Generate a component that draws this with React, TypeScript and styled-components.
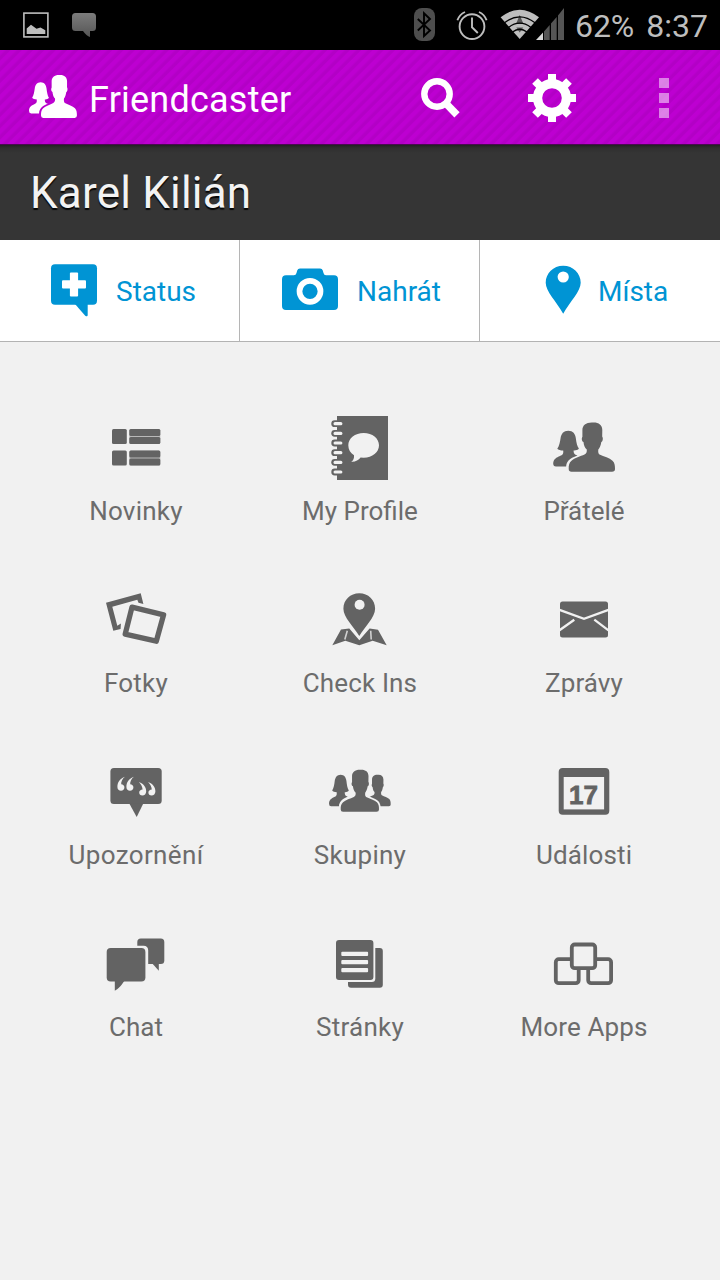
import React from "react";
import styled, { createGlobalStyle } from "styled-components";

const INK = "#636363";
const PAGE = "#f1f1f1";
const BLUE = "#0094d4";
const SYS = "#bebebe";

const GlobalStyle = createGlobalStyle`
  * { box-sizing: border-box; }
  body {
    margin: 0;
    background: ${PAGE};
    font-family: Roboto, "Noto Sans", sans-serif;
  }
`;

const Screen = styled.div`
  display: flex;
  flex-direction: column;
  width: 720px;
  min-height: 1280px;
  background: ${PAGE};
`;

const StatusBar = styled.div`
  display: flex;
  align-items: center;
  height: 50px;
  padding: 0 12px 0 23px;
  background: #000;
`;

const Spacer = styled.div`
  flex: 1;
`;

const Glyph = styled.svg<{ $gap?: number; $lift?: number }>`
  display: block;
  flex: none;
  margin-left: ${(p) => p.$gap ?? 0}px;
  margin-bottom: ${(p) => p.$lift ?? 0}px;
`;

const SystemText = styled.span<{ $gap: number }>`
  margin-left: ${(p) => p.$gap}px;
  padding-top: 2px;
  color: ${SYS};
  font-size: 32px;
  line-height: 48px;
  white-space: nowrap;
`;

const ActionBar = styled.header`
  display: flex;
  align-items: center;
  height: 95px;
  padding: 2px 51px 0 29px;
  border-bottom: 1px solid #4a0a52;
  background: repeating-linear-gradient(135deg, #bd00d1 0 3px, #b300c6 5px 7px, #bd00d1 8px);
`;

const AppTitle = styled.h1`
  margin: 3px 0 0 12px;
  color: #fff;
  font-size: 36px;
  font-weight: 400;
  line-height: 44px;
  letter-spacing: 0.22px;
`;

const Overflow = styled.div`
  display: flex;
  flex-direction: column;
  gap: 5px;
  width: 10px;
  margin-left: 83px;
`;

const Dot = styled.i`
  height: 10px;
  background: rgba(255, 255, 255, 0.5);
`;

const ProfileBar = styled.div`
  display: flex;
  align-items: center;
  height: 95px;
  padding: 1px 30px 0;
  background: linear-gradient(#222 0, #2f2f2f 3px, #353535 8px);
`;

const ProfileName = styled.h2`
  margin: 0;
  color: #f3f3f3;
  font-size: 44px;
  font-weight: 400;
  line-height: 56px;
  letter-spacing: 0.2px;
  text-shadow: 0 2px 1px rgba(0, 0, 0, 0.9);
`;

const Tabs = styled.nav`
  display: grid;
  grid-template-columns: repeat(3, 240px);
  height: 102px;
  border-bottom: 1px solid #b3b3b3;
  background: #fff;
`;

const Tab = styled.div<{ $inset: number; $gap: number }>`
  display: flex;
  align-items: center;
  gap: ${(p) => p.$gap}px;
  padding-left: ${(p) => p.$inset}px;
  border-right: 1px solid #b5b5b5;
  color: ${BLUE};
  &:last-child { border-right: 0; }
`;

const TabText = styled.span`
  padding-top: 2px;
  font-size: 28px;
  line-height: 34px;
`;

const Grid = styled.main`
  display: grid;
  grid-template-columns: repeat(3, 224px);
  grid-auto-rows: 172px;
  padding: 74px 24px 0;
`;

const Cell = styled.div`
  display: flex;
  flex-direction: column;
  align-items: center;
  gap: 16px;
`;

const Label = styled.span<{ $spacing: number }>`
  color: #6c6c6c;
  font-size: 26px;
  line-height: 30px;
  letter-spacing: ${(p) => (p.$spacing ? `${p.$spacing}px` : "normal")};
  white-space: nowrap;
`;

const MAN =
  "M40 6.6C46 6 50.3 8.5 50.3 14L50.2 20.5C51.4 22 50.8 25.5 49.3 26C48.8 29.5 47.6 32 46.3 33.5C46 36 46.3 37.6 47.5 38.5C52 40.5 57.5 42 60.5 44.7C62.6 46.8 63 49 63 53Q63 55.8 60 55.8H19.5Q16.7 55.8 16.7 53C16.6 49 17.2 46.8 19.5 44.7C22.5 42 28.5 40.3 32.5 38.5C34.3 37.5 35 36.2 34.8 33.5C33 32 31.8 29.5 31.5 26C29.8 25.5 29.3 22.5 30.4 20.8L30.4 14C30.4 9.5 34 6.5 40 6.6Z";
const WOMAN =
  "M16.3 14.8C21 14.8 23.3 18 23.8 22C24.4 27 25.3 30.5 26.9 32.6C26 34.2 23.5 34.6 21.6 34.5C21.6 36.5 22 38 23.5 38.8L25.5 39.6C21 41.3 14.7 43.5 14.1 50.5H4Q1.2 50.5 1.2 47.5C1.3 43 4.5 41.5 8 40C10.5 39 11.6 38 11.2 34.5C8.5 34.4 6.3 34 5.3 32.7C7.3 30 8 26 8.6 22C9.2 18 11.5 14.8 16.3 14.8Z";
const OPEN_QUOTE =
  "M20.9 16.7C16 18.5 13.4 22 13.4 27C13.4 29.5 15 30.7 17 30.7C19 30.7 20.4 29.3 20.4 27.3C20.4 25.5 19 24.2 17.2 24.2C17 21.5 18.5 18.5 20.9 16.7Z";
const CLOSE_QUOTE =
  "M34.9 21.9C39.5 23.5 42.2 27 42.2 31.2C42.2 34 40.5 35.6 38.4 35.6C36.4 35.6 35.2 34.4 35.2 32.6C35.2 30.8 36.6 29.8 38.6 29.6C38.4 26.5 37 24 34.9 21.9Z";

const Icon = ({ color = INK, children }: { color?: string; children: React.ReactNode }) => (
  <Glyph width="64" height="64" viewBox="0 0 64 64" fill={color}>
    {children}
  </Glyph>
);

const NewsIcon = () => (
  <Icon>
    {[13, 34.4].map((y) => (
      <g key={y}>
        <rect x="8" y={y} width="14.8" height="15" rx="1.5" />
        <rect x="25.3" y={y} width="31" height="15" rx="1.5" fill="#b9b9b9" />
        <rect x="25.3" y={y} width="31" height="7" rx="1.5" />
        <rect x="25.3" y={y + 8} width="31" height="7" rx="1.5" />
      </g>
    ))}
  </Icon>
);

const ProfileIcon = () => (
  <Icon>
    <rect x="9" y="0" width="51" height="64" />
    {[7.7, 17.3, 27, 36.7, 46.3, 56].map((y) => (
      <g key={y}>
        <rect x="3.3" y={y - 3.4} width="9" height="6.8" rx="3.4" />
        <rect x="5.5" y={y - 1.6} width="8.9" height="3.2" rx="1.5" fill={PAGE} />
      </g>
    ))}
    <path d="M35.7 17C44.4 17 51 22.3 51 29.3S44.4 41.7 35.7 41.7Q34 41.7 32.6 41.6C30.5 44.5 27 46.2 23.2 45.8C25.3 44.4 26.3 42.5 26 39.2C22.3 37 20.3 33.5 20.3 29.3C20.3 22.3 27 17 35.7 17Z" fill={PAGE} />
  </Icon>
);

const FriendsIcon = () => (
  <Icon>
    <path d={WOMAN} />
    <path d={MAN} />
  </Icon>
);

const PhotosIcon = () => (
  <Icon>
    <path d="M2 14.7L36.7 5.3L39.4 16L34.5 14.7L33.3 11.8L8.3 18.7L13.3 37.8L16.9 35.5L16.6 41L9.3 42.7Z" />
    <path d="M28 19.2L59.6 26.8L52.3 53.2L21.2 46.2Z" fill="none" stroke={INK} strokeWidth="5.3" strokeLinejoin="round" />
  </Icon>
);

const CheckInIcon = () => (
  <Icon>
    <path d="M4.3 57.2L13 41.4L21.3 40.6L31.3 52.3L41.6 40.6L50 41.8L58.7 57.2L44.7 52.7L31.3 57.3L17.3 52.7Z" />
    <path d="M19.3 42.7L16.8 51.5M42.7 42.7L43.2 51.5" stroke="#d0d0d0" strokeWidth="1.6" />
    <path
      stroke={PAGE}
      strokeWidth="3.4"
      paintOrder="stroke"
      d="M31.3 5.3C40.3 5.3 47.1 12 47.1 20.8C47.1 29.5 37 38.5 31.3 48C25.6 38.5 15.4 29.5 15.4 20.8C15.4 12 22.3 5.3 31.3 5.3Z"
    />
    <circle cx="31.6" cy="16.7" r="5" fill={PAGE} />
  </Icon>
);

const MessagesIcon = () => (
  <Icon>
    <rect x="8" y="13.4" width="48" height="36" rx="2.5" />
    <path d="M7.5 21.8L32 30.8L56.5 21.8M7.5 42.3L22.3 31.7M56.5 42.3L42.3 31.7" fill="none" stroke={PAGE} strokeWidth="2.3" />
  </Icon>
);

const NoticesIcon = () => (
  <Icon>
    <rect x="6.4" y="8" width="51.3" height="36" rx="3.5" />
    <path d="M25.3 43.5L32.7 57L39.3 43.5Z" />
    <g fill={PAGE}>
      <path d={OPEN_QUOTE} />
      <path d={OPEN_QUOTE} transform="translate(9 0)" />
      <path d={CLOSE_QUOTE} />
      <path d={CLOSE_QUOTE} transform="translate(9.2 0)" />
    </g>
  </Icon>
);

const GroupsIcon = () => (
  <Icon>
    <path d={WOMAN} transform="translate(.1 1.6) scale(.77 .885)" />
    <path d={MAN} transform="translate(26.6 10.5) scale(.573 .64)" />
    <path d={MAN} transform="translate(-1.1 4.15) scale(.827 .854)" stroke={PAGE} strokeWidth="4.4" paintOrder="stroke" />
  </Icon>
);

const DayText = styled.text`
  font: bold 26px "Liberation Sans", Arial, sans-serif;
  stroke: ${INK};
  stroke-width: 0.8px;
`;

const EventsIcon = () => (
  <Icon>
    <rect x="6.7" y="8" width="50.6" height="46.8" rx="4" />
    <rect x="11.7" y="17" width="40.4" height="32.4" fill={PAGE} />
    <DayText x="17" y="43.8">17</DayText>
  </Icon>
);

const ChatIcon = () => (
  <Icon>
    <rect x="33.3" y="6.6" width="27" height="25.4" rx="3.5" />
    <path d="M48.3 31.5L54.8 38.7V31.5Z" />
    <path d="M31 13.7H39.5Q44.2 13.7 44.2 18.5V34H31Z" fill={PAGE} />
    <rect x="2.7" y="16" width="38.7" height="33.4" rx="4" />
    <path d="M10.8 49V58.7Q15 57 20.3 49Z" />
  </Icon>
);

const PagesIcon = () => (
  <Icon>
    <rect x="20" y="16" width="34.8" height="39.8" rx="3" />
    <path d="M18 14H47.3V46.5Q47.3 50 43.8 50H18Z" fill={PAGE} />
    <rect x="8" y="8" width="37.4" height="40" rx="3" />
    <g fill={PAGE}>
      <rect x="13.3" y="19.8" width="26.8" height="4.3" rx="1" />
      <rect x="13.3" y="27.9" width="26.8" height="4.3" rx="1" />
      <rect x="13.3" y="36" width="26.8" height="4.3" rx="1" />
    </g>
  </Icon>
);

const AppsIcon = () => (
  <Icon>
    <g fill={PAGE} stroke={INK} strokeWidth="3.8">
      <rect x="3.8" y="27.2" width="22.9" height="24" rx="3" />
      <rect x="36.2" y="27.2" width="22.9" height="24" rx="3" />
      <rect x="19.8" y="12.5" width="23.4" height="23.7" rx="3" />
    </g>
  </Icon>
);

const PostIcon = () => (
  <Icon color={BLUE}>
    <rect x="9" y="5.3" width="46" height="40.4" rx="4" />
    <path d="M33 45L43.2 56.8Q45.7 58.2 45.7 56V45Z" />
    <g fill="#fff">
      <rect x="27.9" y="13.4" width="8.2" height="24.2" rx="1" />
      <rect x="20" y="21.3" width="24" height="8.2" rx="1" />
    </g>
  </Icon>
);

const CameraIcon = () => (
  <Icon color={BLUE}>
    <path d="M8 16.3H15.8Q18 16.3 18.5 14L19.2 11.5Q19.8 9.4 22 9.4H42Q44.2 9.4 44.8 11.5L45.5 14Q46 16.3 48 16.3H56Q60 16.3 60 20.3V47Q60 51 56 51H8Q4 51 4 47V20.3Q4 16.3 8 16.3Z" />
    <circle cx="32" cy="32.3" r="10.5" fill="none" stroke="#fff" strokeWidth="5.7" />
  </Icon>
);

const PlaceIcon = () => (
  <Icon color={BLUE}>
    <path d="M32.2 6.7C42.2 6.7 49.7 14.2 49.7 23.8C49.7 32.5 39 42.5 32.2 54.8C25.4 42.5 14.7 32.5 14.7 23.8C14.7 14.2 22.2 6.7 32.2 6.7Z" />
    <circle cx="32.2" cy="18" r="5.6" fill="#fff" />
  </Icon>
);

const items: { label: string; icon: React.ReactNode; spacing: number }[] = [
  { label: "Novinky", icon: <NewsIcon />, spacing: 0.25 },
  { label: "My Profile", icon: <ProfileIcon />, spacing: 0 },
  { label: "Přátelé", icon: <FriendsIcon />, spacing: 0 },
  { label: "Fotky", icon: <PhotosIcon />, spacing: 0.2 },
  { label: "Check Ins", icon: <CheckInIcon />, spacing: 0.14 },
  { label: "Zprávy", icon: <MessagesIcon />, spacing: 0.1 },
  { label: "Upozornění", icon: <NoticesIcon />, spacing: 0.35 },
  { label: "Skupiny", icon: <GroupsIcon />, spacing: 0.25 },
  { label: "Události", icon: <EventsIcon />, spacing: 0.14 },
  { label: "Chat", icon: <ChatIcon />, spacing: 0 },
  { label: "Stránky", icon: <PagesIcon />, spacing: 0.25 },
  { label: "More Apps", icon: <AppsIcon />, spacing: 0.14 },
];

export default function App() {
  return (
    <Screen>
      <GlobalStyle />
      <StatusBar>
        <Glyph width="26" height="50" viewBox="23 0 26 50" fill={SYS}>
          <rect x="23.9" y="13.1" width="24" height="23.8" fill="none" stroke={SYS} strokeWidth="1.6" />
          <path d="M26.7 34V28.5L31 24.7L36.5 28.8L40.5 27.5L45.3 30.3V34Z" />
        </Glyph>
        <Glyph $gap={23} width="24" height="50" viewBox="72 0 24 50">
          <linearGradient id="talk" x1="0" y1="0" x2="0" y2="1">
            <stop offset="0" stopColor="#7c7c7c" />
            <stop offset="1" stopColor="#555" />
          </linearGradient>
          <path d="M75.5 13H92.5Q96 13 96 16.5V27.5Q96 31 92.5 31H90V37Q86.5 36 83 31H75.5Q72 31 72 27.5V16.5Q72 13 75.5 13Z" fill="url(#talk)" />
        </Glyph>
        <Spacer />
        <Glyph width="21" height="50" viewBox="414 0 21 50">
          <rect x="414" y="8" width="21" height="33" rx="8" fill="#4e4e4e" />
          <path d="M417.8 19L430 30.5L424 36V13.2L430 19L417.8 30.5" fill="none" stroke="#000" strokeWidth="1.9" />
        </Glyph>
        <Glyph $gap={21} width="32" height="50" viewBox="456 0 32 50" fill="none" stroke={SYS} strokeWidth="1.9">
          <circle cx="472" cy="26.6" r="12.4" />
          <path d="M472 17.5V27.3L477.8 33M457.4 20.3Q459.5 14.5 465 12M486.6 20.3Q484.5 14.5 479 12" />
        </Glyph>
        <Glyph $gap={12} width="64" height="50" viewBox="500 0 64 50">
          <path d="M519.7 39L500.6 17.3Q519.7 2 539 17.3Z" fill={SYS} />
          <path d="M519.7 15L523.5 24H516ZM516.3 27.5H523.3L519.7 32.5Z" fill="#555" />
          <path d="M504.5 22.7Q519.7 11 535 22.7M508.5 27.4Q519.7 19 531 27.4M512.5 32Q519.7 26.5 527 32" fill="none" stroke="#000" strokeWidth="1.3" />
          <path d="M543 32.5V40H536Z" fill="#d8d8d8" />
          <path d="M544 31.5L549.7 25V40H544ZM551 23.5L556.7 17V40H551ZM558 15.5L564 8V40H558Z" fill="#555" />
        </Glyph>
        <SystemText $gap={11}>62%</SystemText>
        <SystemText $gap={12}>8:37</SystemText>
      </StatusBar>

      <ActionBar>
        <Glyph $lift={3} width="48" height="43" viewBox="1.2 6.5 61.9 49.3" preserveAspectRatio="none" fill="#fff">
          <path d={WOMAN} />
          <path d={MAN} />
        </Glyph>
        <AppTitle>Friendcaster</AppTitle>
        <Spacer />
        <Glyph width="48" height="48" viewBox="416 74 48 48" fill="none" stroke="#fff">
          <circle cx="437" cy="94" r="12.7" strokeWidth="6.4" />
          <path d="M446.5 104L457 114.8" strokeWidth="7.4" />
        </Glyph>
        <Glyph $gap={64} width="48" height="48" viewBox="-24 -24 48 48" fill="none" stroke="#fff">
          <circle r="14.4" strokeWidth="9.2" />
          {[0, 45, 90, 135].map((a) => (
            <path key={a} transform={`rotate(${a})`} d="M0 -24V-15M0 15V24" strokeWidth="8" />
          ))}
        </Glyph>
        <Overflow>
          <Dot />
          <Dot />
          <Dot />
        </Overflow>
      </ActionBar>

      <ProfileBar>
        <ProfileName>Karel Kilián</ProfileName>
      </ProfileBar>

      <Tabs>
        <Tab $inset={42} $gap={10}>
          <PostIcon />
          <TabText>Status</TabText>
        </Tab>
        <Tab $inset={38} $gap={15}>
          <CameraIcon />
          <TabText>Nahrát</TabText>
        </Tab>
        <Tab $inset={51} $gap={3}>
          <PlaceIcon />
          <TabText>Místa</TabText>
        </Tab>
      </Tabs>

      <Grid>
        {items.map((it) => (
          <Cell key={it.label}>
            {it.icon}
            <Label $spacing={it.spacing}>{it.label}</Label>
          </Cell>
        ))}
      </Grid>
    </Screen>
  );
}
